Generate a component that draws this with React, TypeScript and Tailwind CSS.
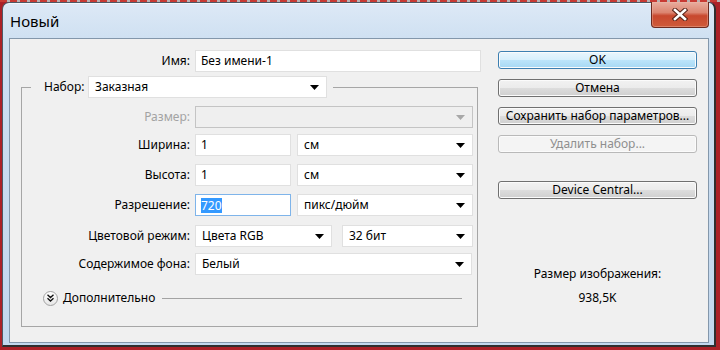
type SelectProps = {
  value?: string;
  className: string;
  disabled?: boolean;
};

function Arrow({ disabled }: { disabled?: boolean }) {
  return (
    <svg width="9" height="5" viewBox="0 0 9 5" className="shrink-0">
      <path d="M0 0h9L4.5 5z" fill={disabled ? '#a8a8a8' : '#000'} />
    </svg>
  );
}

function Select({ value, className, disabled }: SelectProps) {
  return (
    <div
      className={`flex h-[22px] items-center justify-between border pl-[6px] pr-[7px] ${
        disabled ? 'border-[#c4c4c4] bg-[#efefef]' : 'border-[#e0e0e0] bg-white'
      } ${className}`}
    >
      <span className="leading-[16px]">{value}</span>
      <Arrow disabled={disabled} />
    </div>
  );
}

function Field({ value, className }: { value: string; className: string }) {
  return (
    <div className={`flex h-[22px] items-center border border-[#e0e0e0] bg-white pl-[5px] ${className}`}>
      <span className="leading-[16px]">{value}</span>
    </div>
  );
}

function Row({
  label,
  disabled,
  children,
  className,
}: {
  label: string;
  disabled?: boolean;
  children: React.ReactNode;
  className: string;
}) {
  return (
    <div className={`flex h-[22px] items-center ${className}`}>
      <span className={`w-[173px] shrink-0 pr-[5px] text-right ${disabled ? 'text-[#a3a3a3]' : 'text-black'}`}>
        {label}
      </span>
      {children}
    </div>
  );
}

function Btn({ label, kind, className }: { label: string; kind?: 'default' | 'disabled'; className: string }) {
  const look =
    kind === 'default'
      ? 'border-[#3c7fb1] bg-[linear-gradient(#e9f6fd,#d6effc_50%,#bce4fa_50%,#a6d8f4)] text-black'
      : kind === 'disabled'
      ? 'border-[#b9b9b9] bg-[#f4f4f4] text-[#8f8f8f]'
      : 'border-[#707070] bg-[linear-gradient(#f2f2f2,#ebebeb_50%,#dddddd_50%,#cfcfcf)] text-black';
  return (
    <div
      className={`flex h-[18px] w-[199px] items-center justify-center rounded-[3px] border leading-[16px] shadow-[inset_0_0_0_1px_#fbfbfb] ${look} ${className}`}
    >
      {label}
    </div>
  );
}

export default function App() {
  return (
    <div className="flex h-[350px] w-[720px] flex-col overflow-hidden bg-[#ab2127] font-['Noto_Sans',sans-serif] text-[12px] text-black">
      <div className="h-[2px] w-[720px] shrink-0 bg-[repeating-linear-gradient(90deg,#c73a33_0_7px,#b9b2b2_7px_10px)]" />
      <div className="pl-[2px]">
        <div className="flex h-[345px] w-[714px] flex-col rounded-t-[7px] border border-[#4d5a68] border-r-[2px] border-b-[2px] border-r-[#2f2f2f] border-b-[#2f2f2f] bg-[linear-gradient(#dde9f6,#cddff1_12%,#c3d8ee)] shadow-[inset_0_1px_0_#f4f8fc]">
          {/* title bar */}
          <div className="flex h-[35px] shrink-0 items-start justify-between">
            <span className="ml-[7px] mt-[8px] text-[15px] leading-[20px]">Новый</span>
            <div className="mr-[5px] -mt-[1px] flex h-[26px] w-[58px] items-center justify-center rounded-b-[4px] border border-t-0 border-[#6d2a1f] bg-[linear-gradient(#e8ad9f,#dc8570_42%,#c8482e_55%,#cf5b3a)] shadow-[inset_0_0_0_1px_#f0b8a866]">
              <svg width="16" height="13" viewBox="0 0 16 13">
                <path d="M3 2l10 9M13 2L3 11" stroke="#5a2418" strokeWidth="4.6" strokeLinecap="square" />
                <path d="M3 2l10 9M13 2L3 11" stroke="#fff" strokeWidth="2.6" strokeLinecap="square" />
              </svg>
            </div>
          </div>

          {/* client */}
          <div className="ml-[6px] flex h-[305px] w-[700px] border border-[#8397ab] bg-[#f0f0f0]">
            <div className="flex w-[472px] flex-col">
              <div className="mt-[11px] flex h-[22px] items-center">
                <span className="w-[185px] shrink-0 pr-[5px] text-right">Имя:</span>
                <Field value="Без имени-1" className="w-[286px]" />
              </div>

              {/* group */}
              <div className="ml-[11px] mt-[4px] flex w-[457px] flex-col">
                <div className="flex h-[22px] items-center">
                  <div className="h-[11px] w-[10px] shrink-0 self-end border-l border-t border-[#a6a6a6]" />
                  <span className="ml-[13px] w-[44px] shrink-0">Набор:</span>
                  <Select value="Заказная" className="w-[239px]" />
                  <div className="ml-[6px] h-[11px] flex-1 self-end border-r border-t border-[#a6a6a6]" />
                </div>
                <div className="flex h-[229px] flex-col border-b border-l border-r border-[#a6a6a6]">
                  <Row label="Размер:" disabled className="mt-[8px]">
                    <Select className="w-[278px]" disabled />
                  </Row>
                  <Row label="Ширина:" className="mt-[6px]">
                    <Field value="1" className="w-[96px]" />
                    <Select value="см" className="ml-[6px] w-[176px]" />
                  </Row>
                  <Row label="Высота:" className="mt-[8px]">
                    <Field value="1" className="w-[96px]" />
                    <Select value="см" className="ml-[6px] w-[176px]" />
                  </Row>
                  <Row label="Разрешение:" className="mt-[8px]">
                    <div className="flex h-[22px] w-[96px] items-center border border-[#7eb4ea] bg-white pl-[5px]">
                      <span className="bg-[#3399ff] leading-[15px] text-white">720</span>
                    </div>
                    <Select value="пикс/дюйм" className="ml-[6px] w-[176px]" />
                  </Row>
                  <Row label="Цветовой режим:" className="mt-[9px]">
                    <Select value="Цвета RGB" className="w-[137px]" />
                    <Select value="32 бит" className="ml-[10px] w-[131px]" />
                  </Row>
                  <Row label="Содержимое фона:" className="mt-[6px]">
                    <Select value="Белый" className="w-[277px]" />
                  </Row>
                  <div className="mt-[15px] flex h-[16px] items-center">
                    <div className="ml-[21px] flex h-[15px] w-[15px] items-center justify-center rounded-full border border-[#a2a2a2] bg-[linear-gradient(#ffffff,#e6e6e6)]">
                      <svg width="7" height="8" viewBox="0 0 7 8">
                        <path d="M0.5 0.8L3.5 3.6 6.5 0.8M0.5 4.2L3.5 7 6.5 4.2" stroke="#111" strokeWidth="1.3" fill="none" />
                      </svg>
                    </div>
                    <span className="ml-[5px] text-[12px] leading-[16px]">Дополнительно</span>
                    <div className="ml-[7px] mr-[15px] h-px flex-1 bg-[#a3a3a3]" />
                  </div>
                </div>
              </div>
            </div>

            {/* buttons */}
            <div className="ml-[16px] flex w-[199px] flex-col">
              <Btn label="OK" kind="default" className="mt-[12px]" />
              <Btn label="Отмена" className="mt-[10px]" />
              <Btn label="Сохранить набор параметров..." className="mt-[10px]" />
              <Btn label="Удалить набор..." kind="disabled" className="mt-[10px]" />
              <Btn label="Device Central..." className="mt-[28px]" />
              <div className="mt-[67px] text-center leading-[16px]">Размер изображения:</div>
              <div className="mt-[8px] text-center leading-[16px]">938,5K</div>
            </div>
          </div>
        </div>
      </div>
    </div>
  );
}
